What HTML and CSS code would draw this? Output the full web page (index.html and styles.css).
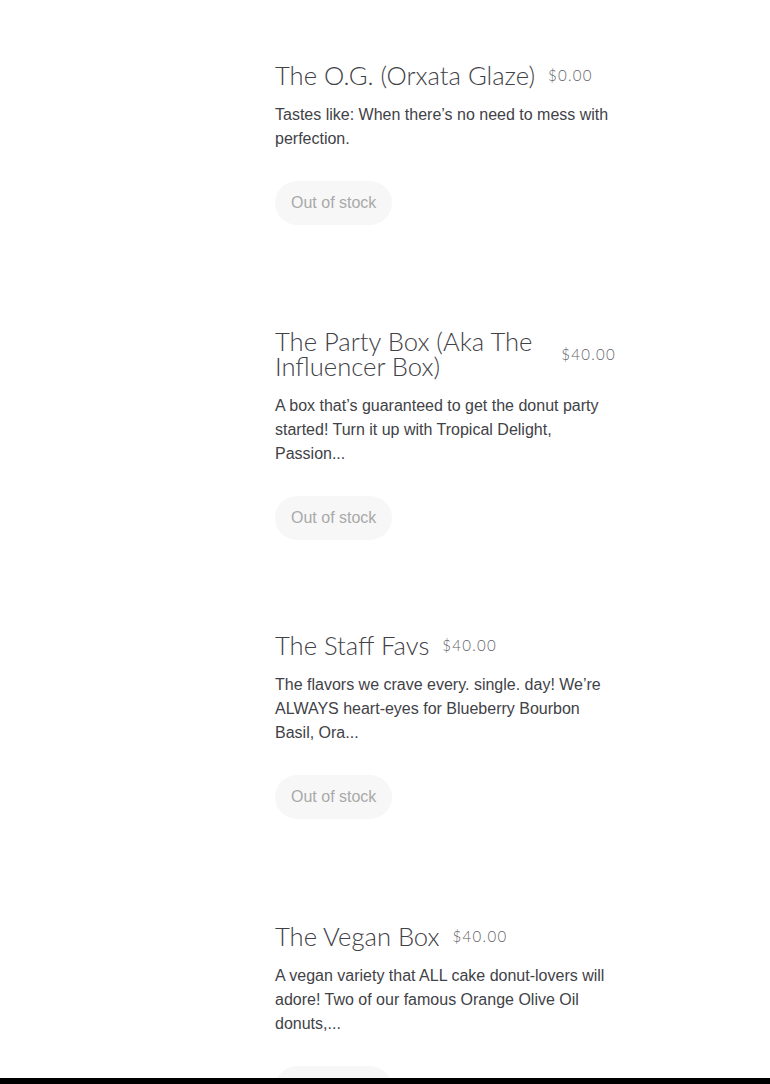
FILE: index.html
```html
<!DOCTYPE html>
<html lang="en">
<head>
<meta charset="utf-8">
<title>Boxes</title>
<link rel="stylesheet" href="styles.css">
</head>
<body>
<main class="product-list">
  <article class="product">
    <div class="product-media"></div>
    <div class="product-info">
      <div class="product-header">
        <h2 class="product-title">The O.G. (Orxata Glaze)</h2>
        <span class="product-price">$0.00</span>
      </div>
      <p class="product-desc">Tastes like: When there’s no need to mess with perfection.</p>
      <button class="btn-stock" disabled>Out of stock</button>
    </div>
  </article>
  <article class="product">
    <div class="product-media"></div>
    <div class="product-info">
      <div class="product-header">
        <h2 class="product-title">The Party Box (Aka The Influencer Box)</h2>
        <span class="product-price product-price-end">$40.00</span>
      </div>
      <p class="product-desc">A box that’s guaranteed to get the donut party started! Turn it up with Tropical Delight, Passion...</p>
      <button class="btn-stock" disabled>Out of stock</button>
    </div>
  </article>
  <article class="product">
    <div class="product-media"></div>
    <div class="product-info">
      <div class="product-header">
        <h2 class="product-title">The Staff Favs</h2>
        <span class="product-price">$40.00</span>
      </div>
      <p class="product-desc">The flavors we crave every. single. day! We’re ALWAYS heart-eyes for Blueberry Bourbon Basil, Ora...</p>
      <button class="btn-stock" disabled>Out of stock</button>
    </div>
  </article>
  <article class="product">
    <div class="product-media"></div>
    <div class="product-info">
      <div class="product-header">
        <h2 class="product-title">The Vegan Box</h2>
        <span class="product-price">$40.00</span>
      </div>
      <p class="product-desc">A vegan variety that ALL cake donut-lovers will adore! Two of our famous Orange Olive Oil donuts,...</p>
      <button class="btn-stock" disabled>Out of stock</button>
    </div>
  </article>
</main>
<div class="bottom-bar"></div>
</body>
</html>
```

FILE: styles.css
```css
html, body {
  margin: 0;
  padding: 0;
  background: #ffffff;
}

body {
  font-family: "Liberation Sans", Arial, sans-serif;
  color: #3a3d42;
}

.product-list {
  display: flex;
  flex-direction: column;
}

.product {
  display: grid;
  grid-template-columns: 251px 341px;
  column-gap: 24px;
  align-items: center;
  padding: 18px 0 22px;
}

.product-media {
  height: 251px;
}

.product-info {
  display: flex;
  flex-direction: column;
  align-items: flex-start;
}

.product-header {
  display: flex;
  align-items: center;
  gap: 13px;
  width: 100%;
}

.product-title {
  margin: 0;
  font-family: "Lato", "Noto Sans", sans-serif;
  font-weight: 300;
  font-size: 25.6px;
  line-height: 25px;
  color: #3f4247;
}

.product-price {
  flex-shrink: 0;
  font-family: "Lato", "Noto Sans", sans-serif;
  font-weight: 300;
  font-size: 15px;
  letter-spacing: 1.3px;
  color: #5f6267;
}

.product-price-end {
  margin-left: auto;
}

.product-desc {
  margin: 15px 0 0;
  font-size: 16px;
  line-height: 24px;
  color: #3f4247;
}

.btn-stock {
  margin-top: 30px;
  height: 44px;
  padding: 0 16px;
  border: none;
  border-radius: 22px;
  background: #f7f7f7;
  color: #a9a9a9;
  font-family: "Liberation Sans", Arial, sans-serif;
  font-size: 16px;
  cursor: default;
}

.bottom-bar {
  position: fixed;
  left: 0;
  right: 0;
  bottom: 0;
  height: 6px;
  background: #000000;
}
```
